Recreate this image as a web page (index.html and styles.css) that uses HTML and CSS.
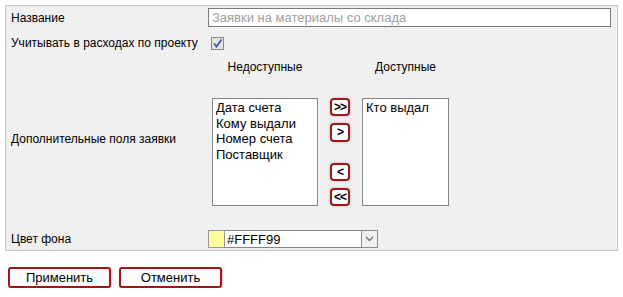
FILE: index.html
```html
<!DOCTYPE html>
<html>
<head>
<meta charset="utf-8">
<link rel="stylesheet" href="styles.css">
</head>
<body>
<div class="panel">
  <div class="row row-name">
    <div class="label">Название</div>
    <div class="field"><input class="text-input" type="text" placeholder="Заявки на материалы со склада"></div>
  </div>
  <div class="row row-check">
    <div class="label">Учитывать в расходах по проекту</div>
    <div class="field"><span class="checkbox"><svg width="11" height="11" viewBox="0 0 11 11"><path d="M2 5.5 L4.5 8.5 L9.5 1.5" fill="none" stroke="#3d5aa8" stroke-width="1.8"/></svg></span></div>
  </div>
  <div class="row row-lists">
    <div class="label">Дополнительные поля заявки</div>
    <div class="field field-top">
      <div class="lists">
        <div class="head head-left">Недоступные</div>
        <div class="head head-mid"></div>
        <div class="head head-right">Доступные</div>
        <div class="listbox listbox-left">
          <div>Дата счета</div>
          <div>Кому выдали</div>
          <div>Номер счета</div>
          <div>Поставщик</div>
        </div>
        <div class="movers">
          <button class="mv">&gt;&gt;</button>
          <button class="mv">&gt;</button>
          <button class="mv mv-gap">&lt;</button>
          <button class="mv">&lt;&lt;</button>
        </div>
        <div class="listbox listbox-right">
          <div>Кто выдал</div>
        </div>
      </div>
    </div>
  </div>
  <div class="row row-color">
    <div class="label">Цвет фона</div>
    <div class="field">
      <div class="colorsel">
        <span class="swatch"></span>
        <span class="colorval">#FFFF99</span>
        <span class="drop"><svg width="9" height="6" viewBox="0 0 9 6"><path d="M1 1 L4.5 4.5 L8 1" fill="none" stroke="#707070" stroke-width="1.3"/></svg></span>
      </div>
    </div>
  </div>
</div>
<div class="actions">
  <button class="btn">Применить</button>
  <button class="btn">Отменить</button>
</div>
</body>
</html>
```
FILE: styles.css
```css
html, body {
  margin: 0;
  padding: 0;
  background: #ffffff;
}
body {
  font-family: "Liberation Sans", Arial, sans-serif;
  font-size: 12px;
  color: #000;
}
.panel {
  margin: 5px 0 0 5px;
  width: 611px;
  border: 1px solid #c4c4c4;
  background: #f0f0f0;
}
.row {
  display: flex;
  align-items: center;
}
.label {
  width: 197px;
  padding-left: 5px;
  flex: none;
}
.field {
  flex: 1;
}
.field-top {
  align-self: flex-start;
}
.row-name {
  height: 25px;
  align-items: flex-start;
}
.row-name .label {
  padding-top: 5px;
}
.text-input {
  margin-top: 2px;
  width: 403px;
  height: 19px;
  box-sizing: border-box;
  border: 1px solid #7a7a7a;
  background: #fff;
  padding: 0 3px;
  font-family: "Liberation Sans", Arial, sans-serif;
  font-size: 13px;
  outline: none;
}
.text-input::placeholder {
  color: #a0a0a0;
}
.row-check {
  height: 24px;
}
.checkbox {
  display: flex;
  align-items: center;
  justify-content: center;
  margin-left: 3px;
  width: 13px;
  height: 13px;
  box-sizing: border-box;
  border: 1px solid #8a8a8a;
  background: #e4e4e4;
}
.row-lists {
  height: 168px;
}
.lists {
  display: grid;
  grid-template-columns: 4px 106px 12px 20px 12px 87px;
  grid-template-rows: 24px 108px;
  row-gap: 19px;
}
.head {
  display: flex;
  align-items: center;
  justify-content: center;
}
.head-left { grid-column: 2; grid-row: 1; }
.head-mid { grid-column: 4; grid-row: 1; }
.head-right { grid-column: 6; grid-row: 1; }
.listbox {
  grid-row: 2;
  box-sizing: border-box;
  border: 1px solid #858585;
  background: #fff;
  font-size: 13px;
  line-height: 15.5px;
  padding: 1px 3px;
}
.listbox-left { grid-column: 2; }
.listbox-right { grid-column: 6; }
.movers {
  grid-column: 4;
  grid-row: 2;
  display: flex;
  flex-direction: column;
  gap: 7px;
}
.mv {
  width: 20px;
  height: 20px;
  padding: 0;
  box-sizing: border-box;
  border: 2px solid #a31616;
  border-radius: 4px;
  background: #fdfdfd;
  box-shadow: 0 0 2px 1px #d6d6d6;
  font-family: "Liberation Sans", Arial, sans-serif;
  font-weight: bold;
  font-size: 12px;
  line-height: 14px;
  color: #000;
  letter-spacing: -1px;
}
.mv-gap {
  margin-top: 14px;
}
.row-color {
  height: 27px;
  align-items: flex-start;
}
.row-color .label {
  padding-top: 9px;
}
.colorsel {
  display: flex;
  align-items: center;
  width: 170px;
  height: 18px;
  margin-top: 7px;
  background: #fff;
}
.swatch {
  width: 17px;
  height: 18px;
  box-sizing: border-box;
  border: 1px solid #999;
  background: #ffff99;
}
.colorval {
  flex: 1;
  font-size: 13px;
  padding-left: 2px;
  height: 18px;
  line-height: 17px;
  box-sizing: border-box;
  border-top: 1px solid #888;
  border-bottom: 1px solid #888;
}
.drop {
  width: 17px;
  height: 18px;
  box-sizing: border-box;
  border: 1px solid #888;
  background: #f0f0f0;
  display: flex;
  align-items: center;
  justify-content: center;
}
.actions {
  display: flex;
  gap: 8px;
  margin: 16px 0 0 8px;
}
.btn {
  width: 103px;
  height: 21px;
  padding: 0;
  box-sizing: border-box;
  border: 2px solid #a31616;
  border-radius: 3px;
  background: #fdfdfd;
  box-shadow: 1px 1px 2px #c8c8c8;
  font-family: "Liberation Sans", Arial, sans-serif;
  font-size: 13px;
  color: #000;
}
```
